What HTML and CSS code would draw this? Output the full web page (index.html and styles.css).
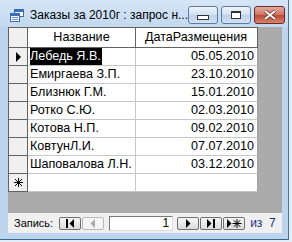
FILE: index.html
```html
<!DOCTYPE html>
<html>
<head>
<meta charset="utf-8">
<title>Заказы за 2010г</title>
<link rel="stylesheet" href="styles.css">
</head>
<body>
<div class="window">
	<div class="titlebar">
		<svg class="app_icon" width="14" height="13" viewBox="0 0 14 13">
			<rect x="4.5" y="0.5" width="9" height="7" fill="#fff" stroke="#3a6fb6"/>
			<rect x="5" y="1" width="8" height="2" fill="#3a6fb6"/>
			<rect x="0.5" y="4.5" width="9" height="8" fill="#fff" stroke="#3a6fb6"/>
			<rect x="1" y="5" width="8" height="2" fill="#3a6fb6"/>
			<rect x="2" y="8" width="6" height="1" fill="#6d93c9"/>
			<rect x="2" y="10" width="6" height="1" fill="#6d93c9"/>
		</svg>
		<span class="caption">Заказы за 2010г : запрос н...</span>
		<div class="caption_btns">
			<span class="cbtn"><i class="ico_min"></i></span>
			<span class="cbtn"><i class="ico_max"></i></span>
			<span class="cbtn close">
				<svg width="14" height="10" viewBox="0 0 14 10"><path d="M2 1 L12 9 M12 1 L2 9" stroke="#5b2a2a" stroke-width="3.4"/><path d="M2 1 L12 9 M12 1 L2 9" stroke="#fff" stroke-width="2"/></svg>
			</span>
		</div>
	</div>
	<div class="client">
		<div class="sheet">
			<div class="grid">
				<div class="row head">
					<div class="sel"></div>
					<div class="cell name">Название</div>
					<div class="cell date">ДатаРазмещения</div>
				</div>
				<div class="row">
					<div class="sel"><i class="arrow"></i></div>
					<div class="cell name"><span class="picked">Лебедь Я.В.</span></div>
					<div class="cell date">05.05.2010</div>
				</div>
				<div class="row">
					<div class="sel"></div>
					<div class="cell name">Емиргаева З.П.</div>
					<div class="cell date">23.10.2010</div>
				</div>
				<div class="row">
					<div class="sel"></div>
					<div class="cell name">Близнюк Г.М.</div>
					<div class="cell date">15.01.2010</div>
				</div>
				<div class="row">
					<div class="sel"></div>
					<div class="cell name">Ротко С.Ю.</div>
					<div class="cell date">02.03.2010</div>
				</div>
				<div class="row">
					<div class="sel"></div>
					<div class="cell name">Котова Н.П.</div>
					<div class="cell date">09.02.2010</div>
				</div>
				<div class="row">
					<div class="sel"></div>
					<div class="cell name">КовтунЛ.И.</div>
					<div class="cell date">07.07.2010</div>
				</div>
				<div class="row">
					<div class="sel"></div>
					<div class="cell name">Шаповалова Л.Н.</div>
					<div class="cell date">03.12.2010</div>
				</div>
				<div class="row">
					<div class="sel"><svg width="9" height="9" viewBox="0 0 9 9"><path d="M4.5 0 V9 M0 4.5 H9 M1 1 L8 8 M8 1 L1 8" stroke="#000" stroke-width="1"/></svg></div>
					<div class="cell name"></div>
					<div class="cell date"></div>
				</div>
			</div>
		</div>
		<div class="navbar">
			<span class="nav_label">Запись:</span>
			<span class="nbtn"><svg width="10" height="9" viewBox="0 0 10 9"><rect x="1" y="0" width="2" height="9"/><path d="M9 0 L4.5 4.5 L9 9 Z"/></svg></span>
			<span class="nbtn off"><svg width="10" height="9" viewBox="0 0 10 9"><path d="M7 0 L2.5 4.5 L7 9 Z" fill="#a8a8a8"/></svg></span>
			<span class="nav_box">1</span>
			<span class="nbtn"><svg width="10" height="9" viewBox="0 0 10 9"><path d="M3 0 L7.5 4.5 L3 9 Z"/></svg></span>
			<span class="nbtn"><svg width="10" height="9" viewBox="0 0 10 9"><path d="M1 0 L5.5 4.5 L1 9 Z"/><rect x="7" y="0" width="2" height="9"/></svg></span>
			<span class="nbtn"><svg width="16" height="11" viewBox="0 0 16 11"><path d="M1 1 L5.5 5.5 L1 10 Z"/><path d="M11 1 V10 M6.5 5.5 H15.5 M7.8 2.2 L14.2 8.8 M14.2 2.2 L7.8 8.8" stroke="#000" stroke-width="1"/></svg></span>
			<span class="nav_total">из&nbsp;&nbsp;7</span>
		</div>
	</div>
</div>
</body>
</html>
```

FILE: styles.css
```css
html, body { margin: 0; padding: 0; }
body { width: 292px; height: 242px; overflow: hidden; background: #e4eef9; }

.window { width: 289px; height: 240px; box-sizing: border-box; display: flex; flex-direction: column; background: #bed3ec; border-right: 1px solid #3f7795; border-bottom: 1px solid #2f6d8e; padding-bottom: 6px; }

/* title bar */
.titlebar { height: 27px; flex: none; display: flex; align-items: center; padding: 0 6px 0 10px; background: linear-gradient(#d6e5f6, #c3d8ef); }
.app_icon { flex: none; margin: 3px 6px 0 0; }
.caption { font: 12px "Liberation Sans", Arial, sans-serif; color: #000; margin-top: 3px; white-space: nowrap; }
.caption_btns { display: flex; gap: 3px; margin: 3px 0 0 auto; }
.cbtn { width: 30px; height: 18px; box-sizing: border-box; border: 1px solid #5b7ba3; border-radius: 3px; background: linear-gradient(#eef3fa, #d2e0f0 50%, #bdd0e8 51%, #d3e1f1); display: flex; align-items: center; justify-content: center; }
.cbtn.close { width: 31px; border-color: #6b2b2b; background: linear-gradient(#e3aa9f, #cf7464 50%, #bb4532 51%, #d6866f); }
.ico_min { width: 10px; height: 3px; border: 1px solid #333; background: #fff; margin-top: 5px; }
.ico_max { width: 8px; height: 5px; border: 1px solid #333; border-top-width: 2px; background: #fff; }

/* client */
.client { flex: 1; display: flex; flex-direction: column; margin-left: 8px; width: 274px; }
.sheet { flex: 1; background: #ababab; }
.grid { width: 250px; box-sizing: border-box; border-left: 1px solid #636363; border-top: 1px solid #636363; background: #fff; font: 12.6px Arial, "Liberation Sans", sans-serif; color: #000; }
.row { display: flex; height: 18px; }
.row.head { height: 20px; }
.sel { width: 18px; flex: none; background: #f0f0f0; border-right: 1px solid #636363; border-bottom: 1px solid #636363; display: flex; align-items: center; justify-content: center; }
.cell { box-sizing: border-box; height: 100%; border-right: 1px solid #c8c8c8; border-bottom: 1px solid #c8c8c8; padding: 0 2px; line-height: 17px; white-space: nowrap; overflow: hidden; }
.cell.name { width: 108px; }
.cell.date { width: 122px; text-align: right; padding-right: 3px; border-right-color: #a0a0a0; }
.head .cell { text-align: center; line-height: 19px; background: #fff; border-right-color: #636363; border-bottom-color: #636363; }
.head .sel { border-bottom-color: #636363; }
.picked { background: #000; color: #fff; display: inline-block; line-height: 17px; padding-right: 1px; }
.arrow { width: 0; height: 0; border-left: 5px solid #000; border-top: 5px solid transparent; border-bottom: 5px solid transparent; margin-left: 1px; }

/* navigation */
.navbar { height: 20px; flex: none; background: #f0f0f0; display: flex; align-items: center; padding: 0 0 0 6px; font: 11px "Liberation Sans", Tahoma, sans-serif; color: #000; }
.nav_label { margin-right: 6px; }
.nbtn { width: 22px; height: 13px; box-sizing: border-box; border: 1px solid #707070; border-radius: 2px; background: linear-gradient(#f6f6f6, #dcdcdc); display: flex; align-items: center; justify-content: center; margin-right: 1px; }
.nbtn.off { border-color: #b8b8b8; background: #f4f4f4; }
.nav_box { width: 64px; height: 15px; box-sizing: border-box; border: 1px solid #7a7a7a; border-right-color: #dcdcdc; border-bottom-color: #dcdcdc; background: #fff; text-align: right; padding-right: 3px; line-height: 13px; margin: 0 4px 0 4px; font-size: 12px; }
.nav_total { margin-left: 4px; color: #1a2f80; font-size: 12px; }
```
